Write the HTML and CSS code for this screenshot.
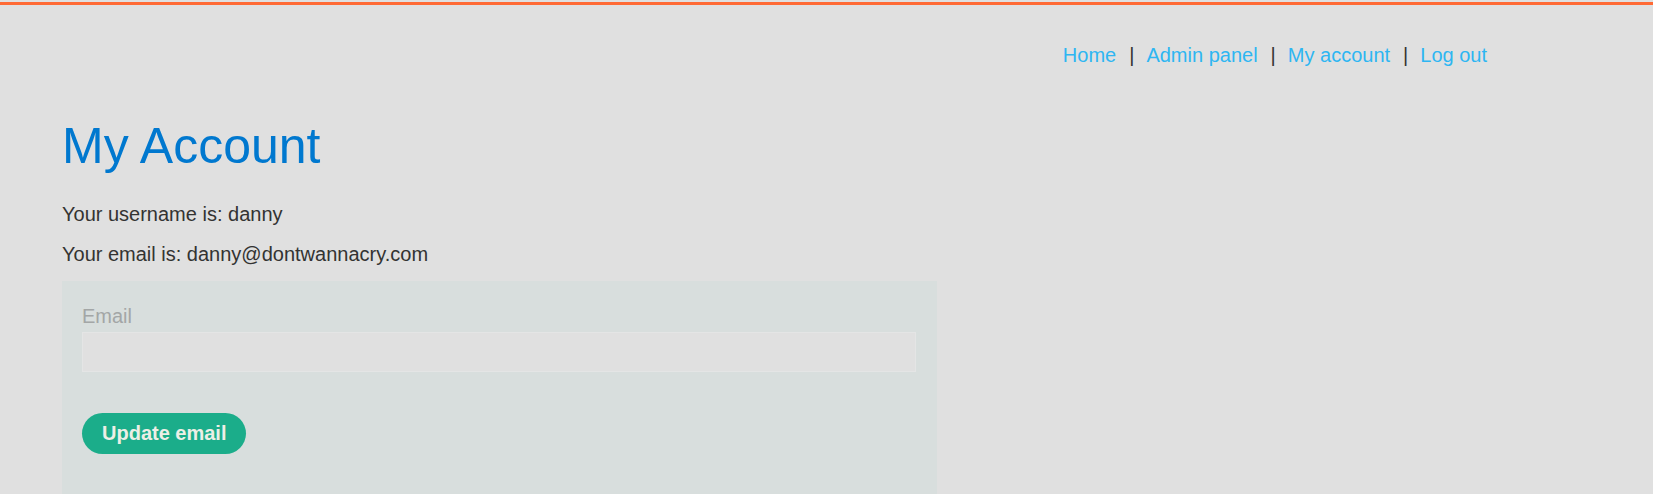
FILE: index.html
```html
<!DOCTYPE html>
<html lang="en">
<head>
<meta charset="utf-8">
<title>My Account</title>
<link rel="stylesheet" href="styles.css">
</head>
<body>
<div class="topbar"></div>
<header class="nav">
  <a href="#">Home</a><span class="sep">|</span>
  <a href="#">Admin panel</a><span class="sep">|</span>
  <a href="#">My account</a><span class="sep">|</span>
  <a href="#">Log out</a>
</header>
<main class="content">
  <h1 class="title">My Account</h1>
  <p class="info">Your username is: danny</p>
  <p class="info">Your email is: danny@dontwannacry.com</p>
  <form class="email-form">
    <label class="label" for="email">Email</label>
    <input class="input" id="email" type="email" name="email">
    <button class="button" type="button">Update email</button>
  </form>
</main>
</body>
</html>
```
FILE: styles.css
```css
html, body {
  margin: 0;
  padding: 0;
  height: 100%;
  overflow: hidden;
}
body {
  background: #e0e0e0;
  font-family: "Liberation Sans", Arial, sans-serif;
  font-size: 20px;
  color: #333332;
}
.topbar {
  margin-top: 2px;
  height: 3px;
  background: #ff6a35;
}
.nav {
  display: flex;
  justify-content: flex-end;
  align-items: baseline;
  padding: 39px 166px 0 0;
  line-height: 22px;
}
.nav a {
  color: #2eb6f2;
  text-decoration: none;
}
.sep {
  margin: 0 12px 0 13px;
  color: #333332;
}
.content {
  padding: 52px 0 0 62px;
}
.title {
  margin: 0;
  font-size: 50px;
  font-weight: normal;
  line-height: 56px;
  color: #0078cf;
}
.info {
  margin: 29px 0 0;
  line-height: 22px;
}
.info + .info {
  margin-top: 18px;
}
.email-form {
  margin-top: 16px;
  width: 875px;
  box-sizing: border-box;
  padding: 24px 21px 60px 20px;
  background: #d8dedd;
  min-height: 300px;
}
.label {
  display: block;
  color: #a3a6a6;
  line-height: 22px;
}
.input {
  display: block;
  box-sizing: border-box;
  width: 100%;
  height: 40px;
  margin-top: 5px;
  background: #e0e0e0;
  border: 1px solid #e4e5e5;
  outline: none;
  font: inherit;
}
.button {
  display: block;
  margin-top: 41px;
  height: 41px;
  padding: 0 20px;
  border: none;
  border-radius: 21px;
  background: #1bad8a;
  color: #edefe6;
  font-family: "Liberation Sans", Arial, sans-serif;
  font-size: 20px;
  font-weight: bold;
}
```
